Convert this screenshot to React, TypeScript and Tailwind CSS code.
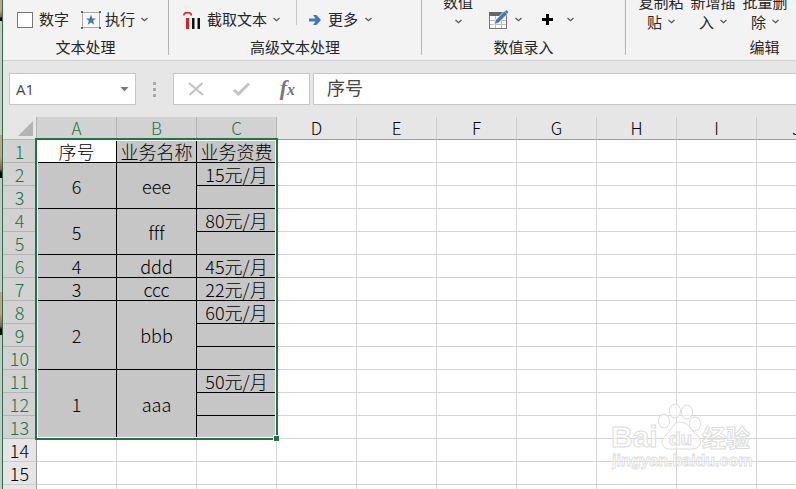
import React from "react";

const sans = "font-['Noto_Sans_CJK_SC','Noto_Sans',sans-serif]";

function Chevron({ className = "" }: { className?: string }) {
  return (
    <svg className={`shrink-0 ${className}`} width="7" height="5" viewBox="0 0 7 5" fill="none" stroke="#555" strokeWidth="1.2" aria-hidden="true">
      <path d="M0.500 1 L3.500 3.800 L6.500 1" />
    </svg>
  );
}

function StarFrame() {
  return (
    <svg width="20" height="18" viewBox="0 0 20 18" aria-hidden="true">
      <rect x="1.5" y="1.5" width="17" height="15" fill="#f8f8f8" stroke="#aaa" />
      <path d="M0 0h2v2H0zM18 0h2v2h-2zM0 16h2v2H0zM18 16h2v2h-2z" fill="#666" />
      <path d="M10 3.500l1.400 3.900H15l-2.900 2.300 1.100 4L10 11.400l-3.200 2.300 1.100-4L5 7.400h3.600z" fill="#3f78b5" />
    </svg>
  );
}

function ExtractIcon() {
  return (
    <svg width="18" height="18" viewBox="0 0 18 18" aria-hidden="true">
      <path d="M1 4.500V3.200L2.600 1.800h4L8.200 3.200v1.300" fill="none" stroke="#e0201c" strokeWidth="1.600" />
      <path d="M3 7h3v11H3z" fill="#e0201c" />
      <path d="M9 7h2.500v11H9zM14.500 7H17v11h-2.500z" fill="#111" />
    </svg>
  );
}

function ArrowIcon() {
  return (
    <svg width="12" height="10" viewBox="0 0 12 10" aria-hidden="true">
      <path d="M0 3.500h6.500L4 0h3.500L12 5 7.500 10H4l2.500-3.500H0z" fill="#3f78b5" />
    </svg>
  );
}

function TableEditIcon() {
  return (
    <svg width="20" height="20" viewBox="0 0 20 20" aria-hidden="true">
      <rect x="0.500" y="2.500" width="17" height="16" fill="#fff" stroke="#777" />
      <path d="M0 2h18v4H0z" fill="#666" />
      <path d="M6.500 6v12M12.500 6v12M1 10.500h16M1 14.500h16" stroke="#bbb" fill="none" />
      <path d="M5 14.500l1.500-4.500L15.500 1l3 3-9 9z" fill="#3f78b5" stroke="#fff" strokeWidth="0.800" />
      <path d="M16 1.500l1.500-1.500 2 2L18 3.500z" fill="#3f78b5" />
    </svg>
  );
}

function Group({ label, className, children }: { label: string; className: string; children: React.ReactNode }) {
  return (
    <section aria-label={label} className={`flex h-[55px] shrink-0 flex-col border-r border-[#b4b4b4] ${className}`}>
      <div className="flex h-10 items-center">{children}</div>
      <div className="text-center leading-4">{label}</div>
    </section>
  );
}

function TallButton({ top, bottom }: { top: string; bottom: string }) {
  return (
    <button className="-mt-4 flex w-[52px] flex-col items-center leading-5">
      <span className="whitespace-nowrap">{top}</span>
      <span className="flex items-center gap-1.5">
        {bottom}
        <Chevron />
      </span>
    </button>
  );
}

function Ribbon() {
  return (
    <div className="flex h-[61px] shrink-0 overflow-hidden border-b border-[#d0d0d0] bg-[#f3f3f3] text-[15px] text-[#262626]">
      <Group label="文本处理" className="w-[166px]">
        <label className="flex items-center gap-[6px] pl-[14px]">
          <input type="checkbox" className="h-4 w-4 appearance-none border border-[#777] bg-white" />
          数字
        </label>
        <button className="ml-3 flex items-center gap-1">
          <StarFrame />
          执行
          <Chevron className="ml-0.5" />
        </button>
      </Group>
      <Group label="高级文本处理" className="w-[253px]">
        <button className="flex items-center gap-1.5 pl-[14px]">
          <ExtractIcon />
          截取文本
          <Chevron />
        </button>
        <span className="ml-4 h-[25px] w-px self-start bg-[#c8c8c8]" />
        <button className="ml-3 flex items-center gap-[7px]">
          <ArrowIcon />
          更多
          <Chevron />
        </button>
      </Group>
      <Group label="数值录入" className="w-[204px]">
        <button className="-mt-4 ml-[21px] flex w-[30px] flex-col items-center leading-5">
          <span>数值</span>
          <span className="flex h-5 items-center">
            <Chevron />
          </span>
        </button>
        <button aria-label="编辑表格" className="ml-4 flex items-center gap-1.5">
          <TableEditIcon />
          <Chevron />
        </button>
        <button aria-label="添加" className="ml-5 flex items-center gap-[14px]">
          <svg width="11" height="11" viewBox="0 0 11 11" aria-hidden="true">
            <path d="M4 0h3v4h4v3H7v4H4V7H0V4h4z" fill="#000" />
          </svg>
          <Chevron />
        </button>
      </Group>
      <Group label="编辑" className="w-[278px]">
        <div className="flex pl-[9px]">
          <TallButton top="复制粘" bottom="贴" />
          <TallButton top="新增插" bottom="入" />
          <TallButton top="批量删" bottom="除" />
        </div>
      </Group>
    </div>
  );
}

function FormulaBar() {
  return (
    <div className="flex h-14 shrink-0 bg-[#e6e6e6] pt-3 pl-[6px]">
      <div className="flex h-8 w-[127px] items-center border border-[#c6c6c6] bg-white pr-[6px]">
        <input aria-label="名称框" defaultValue="A1" className="min-w-0 flex-1 pl-[6px] font-['Open_Sans',sans-serif] text-[15px] text-[#444]" />
        <button aria-label="展开名称框">
          <svg width="9" height="5" viewBox="0 0 9 5" aria-hidden="true">
            <path d="M0.500 0h8L4.500 4.500z" fill="#777" />
          </svg>
        </button>
      </div>
      <div className="flex h-8 w-[37px] flex-col items-center justify-center gap-[3px]">
        <span className="h-[3px] w-[3px] bg-[#a8a8a8]" />
        <span className="h-[3px] w-[3px] bg-[#a8a8a8]" />
        <span className="h-[3px] w-[3px] bg-[#a8a8a8]" />
      </div>
      <div className="flex h-8 w-[137px] items-center justify-between border border-[#c6c6c6] bg-white px-[14px]">
        <button aria-label="取消">
          <svg width="16" height="14" viewBox="0 0 16 14" fill="none" stroke="#c3c3c3" strokeWidth="2.200" aria-hidden="true">
            <path d="M1 1l14 12M14.500 1L1.500 13" />
          </svg>
        </button>
        <button aria-label="输入">
          <svg width="17" height="14" viewBox="0 0 17 14" fill="none" stroke="#c3c3c3" strokeWidth="3" aria-hidden="true">
            <path d="M1 8l4.500 4L16 1.500" />
          </svg>
        </button>
        <button aria-label="插入函数" className="flex items-baseline font-['Liberation_Serif',serif] text-[22px] leading-6 font-bold text-[#777] italic">
          f<span className="text-[16px]">x</span>
        </button>
      </div>
      <input aria-label="编辑栏" defaultValue="序号" className="ml-[3px] h-8 min-w-0 flex-1 border border-r-0 border-[#c6c6c6] bg-white pb-1 pl-[13px] text-[18px] text-[#444]" />
    </div>
  );
}

type Cell = { text: string; span?: number };

const rows: Cell[][] = [
  [{ text: "序号" }, { text: "业务名称" }, { text: "业务资费" }],
  [{ text: "6", span: 2 }, { text: "eee", span: 2 }, { text: "15元/月" }],
  [{ text: "" }],
  [{ text: "5", span: 2 }, { text: "fff", span: 2 }, { text: "80元/月" }],
  [{ text: "" }],
  [{ text: "4" }, { text: "ddd" }, { text: "45元/月" }],
  [{ text: "3" }, { text: "ccc" }, { text: "22元/月" }],
  [{ text: "2", span: 3 }, { text: "bbb", span: 3 }, { text: "60元/月" }],
  [{ text: "" }],
  [{ text: "" }],
  [{ text: "1", span: 3 }, { text: "aaa", span: 3 }, { text: "50元/月" }],
  [{ text: "" }],
  [{ text: "" }],
  [{ text: "" }, { text: "" }, { text: "" }],
  [{ text: "" }, { text: "" }, { text: "" }],
  [{ text: "" }, { text: "" }, { text: "" }],
];

const columns = ["A", "B", "C", "D", "E", "F", "G", "H", "I", "J"];

function Sheet() {
  return (
    <div className="relative flex-1 overflow-hidden bg-white">
      <table className="w-[834px] table-fixed border-separate border-spacing-0 text-center text-[18px] leading-[22px] font-light text-black [font-variant-ligatures:none]">
        <colgroup>
          <col className="w-[34px]" />
          {columns.map((c) => (
            <col key={c} className="w-20" />
          ))}
        </colgroup>
        <thead>
          <tr className="h-[23px] text-[17px]">
            <th className="border-r border-b border-[#b4b4b4] bg-[#e6e6e6] p-0">
              <svg className="mr-[3px] ml-auto" width="15" height="15" viewBox="0 0 15 15" aria-label="全选">
                <path d="M15 0v15H0z" fill="#b4b4b4" />
              </svg>
            </th>
            {columns.map((c, i) => (
              <th
                key={c}
                scope="col"
                className={`h-[23px] border-r border-b p-0 font-light ${i < 3 ? "border-r-[#b4b4b4] border-b-[#217346] bg-[#d2d2d2] text-[#217346]" : "border-r-[#cbcbcb] border-b-[#9b9b9b] bg-[#e6e6e6]"}`}
              >
                {c}
              </th>
            ))}
          </tr>
        </thead>
        <tbody>
          {rows.map((cells, r) => {
            const selected = r < 13;
            return (
              <tr key={r} className="h-[23px]">
                <th
                  scope="row"
                  className={`h-[23px] border-r border-b p-0 font-light ${selected ? "border-[#b4b4b4] bg-[#d2d2d2] text-[#217346]" : "border-r-[#9b9b9b] border-b-[#cbcbcb] bg-[#e6e6e6]"}`}
                >
                  {r + 1}
                </th>
                {cells.map((cell, i) => (
                  <td
                    key={i}
                    rowSpan={cell.span ?? 1}
                    className={`h-[23px] border-r border-b p-0 whitespace-nowrap ${selected ? "border-black" : "border-[#d4d4d4]"} ${selected && !(r === 0 && i === 0) ? "bg-[#c6c6c6]" : "bg-white"}`}
                  >
                    {cell.text}
                  </td>
                ))}
                {columns.slice(3).map((c) => (
                  <td key={c} className="border-r border-b border-[#d4d4d4] p-0" />
                ))}
              </tr>
            );
          })}
        </tbody>
      </table>
      <div className="pointer-events-none absolute top-[21px] left-8 h-[302px] w-[243px] border-2 border-[#217346]">
        <div className="h-full w-full border border-white" />
        <span className="absolute -right-1 -bottom-1 h-[7px] w-[7px] border border-white bg-[#217346]" />
      </div>
      <Watermark />
    </div>
  );
}

function Watermark() {
  return (
    <svg
      className="pointer-events-none absolute right-10 bottom-3 font-['Liberation_Sans','Noto_Sans_CJK_SC',sans-serif]"
      width="150"
      height="80"
      viewBox="0 0 150 80"
      fill="#fff"
      fillOpacity="0.6"
      stroke="#dcdcdc"
      aria-hidden="true"
    >
      <ellipse cx="58" cy="24" rx="5.500" ry="7" />
      <ellipse cx="69" cy="14" rx="5.500" ry="7" />
      <ellipse cx="81" cy="15" rx="5.500" ry="7" />
      <ellipse cx="89" cy="27" rx="5.500" ry="7" />
      <path d="M74 25c-7 0-8 8-14 13-7 6-4 14 4 14h22c9 0 11-8 5-14-6-5-9-13-17-13z" />
      <text x="5" y="50" fontSize="30" fontWeight="700">Bai</text>
      <text x="63" y="48" fontSize="19" fontWeight="700">du</text>
      <text x="96" y="50" fontSize="24" fontWeight="700">经验</text>
      <text x="6" y="69" fontSize="16" fontWeight="700" strokeWidth="0.800">jingyan.baidu.com</text>
    </svg>
  );
}

function PhotoEdge({ className }: { className: string }) {
  return <div className={`shrink-0 bg-linear-to-b from-[#c99f8c] from-50% via-[#8c5a50] via-80% to-black to-90% ${className}`} />;
}

export default function App() {
  return (
    <div className={`flex h-screen overflow-hidden ${sans}`}>
      <div className="flex w-[2px] shrink-0 flex-col gap-[114px] bg-[#c8c8c8]">
        <PhotoEdge className="h-[21px]" />
        <PhotoEdge className="h-[43px]" />
        <PhotoEdge className="h-[43px]" />
      </div>
      <main className="flex min-w-0 flex-1 flex-col border-l border-[#217346]">
        <Ribbon />
        <FormulaBar />
        <Sheet />
      </main>
    </div>
  );
}
